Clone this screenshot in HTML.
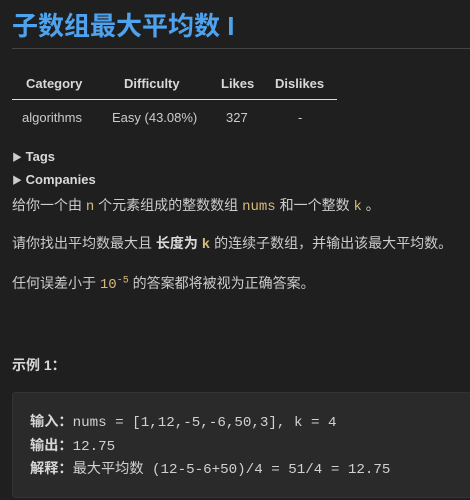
<!DOCTYPE html>
<html><head><meta charset="utf-8"><style>
body{margin:0;background:#1f1f1f;width:470px;height:500px;overflow:hidden;font-family:"Liberation Sans","Noto Sans CJK SC",sans-serif;color:#cccccc;font-size:13px;position:relative}
.a{position:absolute;white-space:nowrap}
h1{position:absolute;left:12px;top:6px;margin:0;font-size:26px;color:#4fa3ee;font-weight:bold;letter-spacing:0px}
.hr{position:absolute;left:12px;right:0;top:48px;height:1px;background:#444}
.th{font-weight:bold;color:#d8d8d8;top:76px}
.td{top:110px}
.tl{position:absolute;left:12px;top:99px;width:325px;height:1px;background:#ddd}
.tri{font-size:10px}
.p{font-size:14px}
.m{font-family:"Liberation Mono","Noto Sans CJK SC",monospace;color:#d7ba7d;font-size:14px}
.box{position:absolute;left:12px;right:-5px;top:392px;height:104px;background:#2a2a2a;border:1px solid #333;border-radius:3px}
.cl{position:absolute;left:30px;font-family:"Liberation Mono","Noto Sans CJK SC",monospace;font-size:14.2px;color:#d0d0d0;white-space:nowrap}
b{color:#d8d8d8}
</style></head><body>
<h1>子数组最大平均数 I</h1>
<div class="hr"></div>
<div class="a th" style="left:26px">Category</div>
<div class="a th" style="left:124px">Difficulty</div>
<div class="a th" style="left:221px">Likes</div>
<div class="a th" style="left:275px">Dislikes</div>
<div class="tl"></div>
<div class="a td" style="left:22px">algorithms</div>
<div class="a td" style="left:112px">Easy (43.08%)</div>
<div class="a td" style="left:226px">327</div>
<div class="a td" style="left:298px">-</div>
<div class="a" style="left:12px;top:149px"><span class="tri">▶</span> <b>Tags</b></div>
<div class="a" style="left:12px;top:172px"><span class="tri">▶</span> <b>Companies</b></div>
<div class="a p" style="left:12px;top:195px">给你一个由 <span class="m">n</span> 个元素组成的整数数组 <span class="m">nums</span> 和一个整数 <span class="m">k</span> 。</div>
<div class="a p" style="left:12px;top:233px">请你找出平均数最大且 <b>长度为 <span class="m">k</span></b> 的连续子数组，并输出该最大平均数。</div>
<div class="a p" style="left:12px;top:273px">任何误差小于 <span class="m">10<sup style="font-size:10px">-5</sup></span> 的答案都将被视为正确答案。</div>
<div class="a p" style="left:12px;top:355px"><b>示例 1：</b></div>
<div class="box"></div>
<div class="cl" style="top:411px"><b>输入：</b>nums = [1,12,-5,-6,50,3], k = 4</div>
<div class="cl" style="top:435px"><b>输出：</b>12.75</div>
<div class="cl" style="top:458px"><b>解释：</b>最大平均数 (12-5-6+50)/4 = 51/4 = 12.75</div>
</body></html>
